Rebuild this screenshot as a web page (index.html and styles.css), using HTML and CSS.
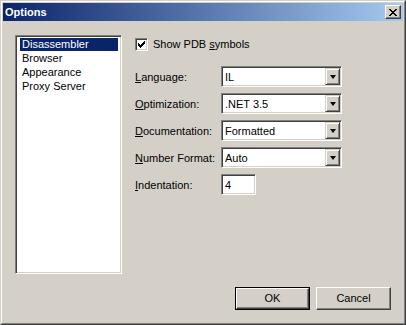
FILE: index.html
```html
<!DOCTYPE html>
<html>
<head>
<meta charset="utf-8">
<link rel="stylesheet" href="styles.css">
</head>
<body>
<div class="window">
  <div class="frame">
    <div class="caption">
      <span class="caption-title">Options</span>
      <div class="close-btn">
        <svg width="8" height="7" viewBox="0 0 8 7" shape-rendering="crispEdges">
          <path d="M0 0h2v1h-2zM1 1h2v1h-2zM2 2h2v1h-2zM3 3h2v1h-2zM2 4h2v1h-2zM1 5h2v1h-2zM0 6h2v1h-2zM6 0h2v1h-2zM5 1h2v1h-2zM4 2h2v1h-2zM4 4h2v1h-2zM5 5h2v1h-2zM6 6h2v1h-2z" fill="#000"/>
        </svg>
      </div>
    </div>
    <div class="client">
      <div class="main">
        <div class="listbox">
          <div class="list-item selected">Disassembler</div>
          <div class="list-item">Browser</div>
          <div class="list-item">Appearance</div>
          <div class="list-item">Proxy Server</div>
        </div>
        <div class="panel">
          <div class="check-row">
            <div class="checkbox">
              <svg width="7" height="7" viewBox="0 0 7 7" shape-rendering="crispEdges">
                <path d="M6 0h1v3h-1zM5 1h1v3h-1zM4 2h1v3h-1zM3 3h1v3h-1zM2 4h1v3h-1zM1 3h1v3h-1zM0 2h1v3h-1z" fill="#000"/>
              </svg>
            </div>
            <span class="check-label">Show PDB <u>s</u>ymbols</span>
          </div>
          <div class="field-row">
            <span class="field-label"><u>L</u>anguage:</span>
            <div class="combo"><span class="combo-text">IL</span><div class="combo-btn"><span class="arrow"></span></div></div>
          </div>
          <div class="field-row">
            <span class="field-label"><u>O</u>ptimization:</span>
            <div class="combo"><span class="combo-text">.NET 3.5</span><div class="combo-btn"><span class="arrow"></span></div></div>
          </div>
          <div class="field-row">
            <span class="field-label"><u>D</u>ocumentation:</span>
            <div class="combo"><span class="combo-text">Formatted</span><div class="combo-btn"><span class="arrow"></span></div></div>
          </div>
          <div class="field-row">
            <span class="field-label"><u>N</u>umber Format:</span>
            <div class="combo"><span class="combo-text">Auto</span><div class="combo-btn"><span class="arrow"></span></div></div>
          </div>
          <div class="field-row">
            <span class="field-label"><u>I</u>ndentation:</span>
            <div class="edit"><span class="combo-text">4</span></div>
          </div>
        </div>
      </div>
      <div class="buttons">
        <div class="btn default"><div class="btn-inner">OK</div></div>
        <div class="btn"><div class="btn-inner">Cancel</div></div>
      </div>
    </div>
  </div>
</div>
</body>
</html>
```

FILE: styles.css
```css
* { box-sizing: border-box; }

html, body {
  margin: 0;
  padding: 0;
  background: #D4D0C8;
}

body {
  font-family: "Liberation Sans", Arial, sans-serif;
  font-size: 11px;
  color: #000;
}

.window {
  width: 406px;
  height: 325px;
  border: 1px solid;
  border-color: #D4D0C8 #404040 #404040 #D4D0C8;
  background: #D4D0C8;
}

.frame {
  width: 100%;
  height: 100%;
  border: 1px solid;
  border-color: #FFFFFF #808080 #808080 #FFFFFF;
  padding: 1px;
  display: flex;
  flex-direction: column;
}

.caption {
  height: 18px;
  flex: none;
  background: linear-gradient(to right, #0A246A 0%, #A6CAF0 100%);
  display: flex;
  align-items: center;
  justify-content: space-between;
  padding: 0 2px 0 2px;
}

.caption-title {
  color: #fff;
  font-weight: bold;
  font-size: 11px;
  line-height: 18px;
}

.close-btn {
  width: 16px;
  height: 14px;
  background: #D4D0C8;
  border: 1px solid;
  border-color: #FFFFFF #404040 #404040 #FFFFFF;
  box-shadow: inset -1px -1px #808080;
  display: flex;
  align-items: center;
  justify-content: center;
}

.close-btn svg { display: block; }

.client {
  flex: 1;
  display: flex;
  flex-direction: column;
  padding: 14px 12px 12px 12px;
}

.main {
  display: flex;
  height: 239px;
}

.listbox {
  width: 107px;
  height: 239px;
  background: #fff;
  border: 1px solid;
  border-color: #808080 #FFFFFF #FFFFFF #808080;
  box-shadow: inset 1px 1px #404040, inset -1px -1px #D4D0C8;
  padding: 2px 3px 2px 4px;
}

.list-item {
  height: 14px;
  line-height: 13px;
  padding-left: 2px;
  white-space: nowrap;
}

.list-item.selected {
  background: #0A246A;
  color: #fff;
  height: 13px;
  margin-bottom: 1px;
}

.panel {
  margin-left: 13px;
  padding-top: 3px;
  display: flex;
  flex-direction: column;
}

.check-row {
  display: flex;
  align-items: center;
  height: 13px;
  margin-bottom: 15px;
}

.checkbox {
  width: 13px;
  height: 13px;
  background: #fff;
  border: 1px solid;
  border-color: #808080 #FFFFFF #FFFFFF #808080;
  box-shadow: inset 1px 1px #404040, inset -1px -1px #D4D0C8;
  display: flex;
  align-items: center;
  justify-content: center;
}

.checkbox svg { display: block; }

.check-label {
  margin-left: 5px;
  line-height: 13px;
}

.field-row {
  display: flex;
  align-items: center;
  height: 21px;
  margin-bottom: 6px;
}

.field-label {
  width: 86px;
  flex: none;
  white-space: nowrap;
}

.combo, .edit {
  height: 21px;
  background: #fff;
  border: 1px solid;
  border-color: #808080 #FFFFFF #FFFFFF #808080;
  box-shadow: inset 1px 1px #404040, inset -1px -1px #D4D0C8;
  display: flex;
  align-items: center;
  padding: 1px;
}

.combo { width: 121px; }
.edit { width: 35px; }

.combo-text {
  flex: 1;
  padding-left: 2px;
  white-space: nowrap;
}

.combo-btn {
  width: 15px;
  height: 17px;
  flex: none;
  background: #D4D0C8;
  border: 1px solid;
  border-color: #D4D0C8 #404040 #404040 #D4D0C8;
  box-shadow: inset 1px 1px #FFFFFF, inset -1px -1px #808080;
  display: flex;
  align-items: center;
  justify-content: center;
}

.arrow {
  width: 0;
  height: 0;
  border-left: 3.5px solid transparent;
  border-right: 3.5px solid transparent;
  border-top: 4px solid #000;
  margin-top: 1px;
}

.buttons {
  margin-top: 13px;
  display: flex;
  justify-content: flex-end;
  gap: 6px;
}

.btn {
  width: 75px;
  height: 23px;
  background: #D4D0C8;
  border: 1px solid;
  border-color: #FFFFFF #404040 #404040 #FFFFFF;
  box-shadow: inset -1px -1px #808080;
}

.btn.default {
  border: 1px solid #000;
  box-shadow: none;
}

.btn-inner {
  width: 100%;
  height: 100%;
  display: flex;
  align-items: center;
  justify-content: center;
  line-height: 13px;
}

.btn.default .btn-inner {
  border: 1px solid;
  border-color: #FFFFFF #404040 #404040 #FFFFFF;
  box-shadow: inset -1px -1px #808080;
}
```
